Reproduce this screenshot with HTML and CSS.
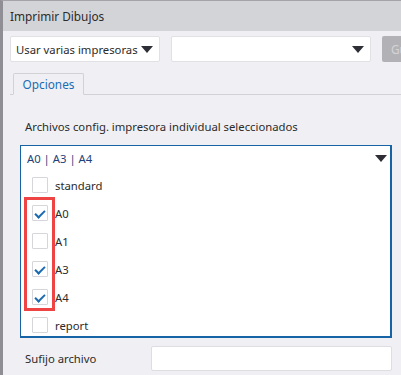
FILE: index.html
```
<!DOCTYPE html>
<html>

<head>
    <title>Imprimir Dibujos</title>

    <link rel="stylesheet" href="styles.css">
</head>

<body>

    <div class="window">

        <div class="titlebar">Imprimir Dibujos</div>

        <div class="toolbar">
            <div class="select select-mode">
                <span>Usar varias impresoras</span>
                <span class="caret"></span>
            </div>
            <div class="select select-printer">
                <span></span>
                <span class="caret"></span>
            </div>
            <button class="btn-save">Guardar</button>
        </div>

        <div class="tabs">
            <div class="tab">Opciones</div>
        </div>

        <div class="options">

            <div class="field-label">Archivos config. impresora individual seleccionados</div>

            <div class="multi-select">
                <div class="multi-head">
                    <span>A0 | A3 | A4</span>
                    <span class="caret"></span>
                </div>

                <div class="multi-list">
                    <div class="marker"></div>
                    <label class="item"><span class="box"></span>standard</label>
                    <label class="item"><span class="box checked"></span>A0</label>
                    <label class="item"><span class="box"></span>A1</label>
                    <label class="item"><span class="box checked"></span>A3</label>
                    <label class="item"><span class="box checked"></span>A4</label>
                    <label class="item"><span class="box"></span>report</label>
                </div>
            </div>

            <div class="form-row">
                <label for="suffix">Sufijo archivo</label>
                <input type="text" id="suffix">
            </div>

        </div>

    </div>

</body>

</html>
```

FILE: styles.css
```
* {
    margin: 0;
    padding: 0;
    box-sizing: border-box;
}

html,
body {
    width: 100%;
    height: 100%;
    overflow: hidden;
}

body {
    font-family: "Noto Sans", "Open Sans", sans-serif;
    font-size: 11.3px;
    color: #2b2b2b;
    background-color: #f0f0f4;
}

.window {
    height: 100%;
    border-left: 3px solid #8e8e94;
    border-top: 1px solid #a3a3a8;
}

.titlebar {
    height: 30px;
    line-height: 30px;
    padding-left: 7px;
    font-size: 11.8px;
    background-color: #d3d4d8;
}

.toolbar {
    display: flex;
    padding: 5px 0 0 7px;
    gap: 11px;
}

.select {
    flex-shrink: 0;
    height: 26px;
    display: flex;
    align-items: center;
    justify-content: space-between;
    padding: 0 4px 0 5px;
    white-space: nowrap;
    background-color: #fff;
    border: 1px solid #e1e1e5;
    border-radius: 2px;
}

.select-mode {
    width: 150px;
}

.select-printer {
    width: 200px;
}

.caret {
    width: 0;
    height: 0;
    border-left: 6px solid transparent;
    border-right: 6px solid transparent;
    border-top: 7px solid #2e2e36;
    margin-right: 2px;
}

.btn-save {
    flex-shrink: 0;
    height: 26px;
    width: 80px;
    padding-left: 9px;
    text-align: left;
    font-family: inherit;
    font-size: 11.8px;
    color: #d4d4d8;
    background-color: #b2b2b6;
    border: none;
    border-radius: 2px;
}

.tabs {
    margin: 11px 0 0 7px;
    padding-left: 3px;
    border-bottom: 1px solid #d2d2d6;
    display: flex;
}

.tab {
    width: 71px;
    height: 22px;
    line-height: 20px;
    margin-bottom: -1px;
    text-align: center;
    color: #1c6cb4;
    font-size: 11.8px;
    border: 1px solid #d2d2d6;
    border-bottom: 1px solid #f0f0f4;
    border-radius: 2px 2px 0 0;
}

.options {
    padding: 0 9px 0 17px;
}

.field-label {
    margin: 24px 0 0 5px;
    height: 26px;
}

.multi-select {
    height: 193px;
    background-color: #fff;
    border: 2px solid #1663a6;
    border-top-width: 1px;
    border-left-width: 1px;
}

.multi-head {
    height: 25px;
    display: flex;
    align-items: center;
    justify-content: space-between;
    padding: 0 1px 0 6px;
    color: #243f78;
}

.multi-list {
    position: relative;
}

.item {
    height: 28px;
    display: flex;
    align-items: center;
    padding-left: 11px;
}

.box {
    width: 16px;
    height: 16px;
    margin-right: 7px;
    border: 1px solid #d6d6da;
    border-radius: 1px;
    position: relative;
}

.box.checked::after {
    content: "";
    position: absolute;
    left: 4px;
    top: 2px;
    width: 4px;
    height: 8px;
    border-right: 2px solid #1a6ab2;
    border-bottom: 2px solid #1a6ab2;
    transform: rotate(45deg);
}

.marker {
    position: absolute;
    left: 3px;
    top: 26px;
    width: 31px;
    height: 114px;
    border: 3px solid #ef4444;
}

.form-row {
    display: flex;
    align-items: center;
    margin-top: 8px;
}

.form-row label {
    width: 131px;
    padding-left: 5px;
}

.form-row input {
    width: 241px;
    height: 25px;
    border: 1px solid #dedee2;
    border-radius: 2px;
    background-color: #fff;
}
```
